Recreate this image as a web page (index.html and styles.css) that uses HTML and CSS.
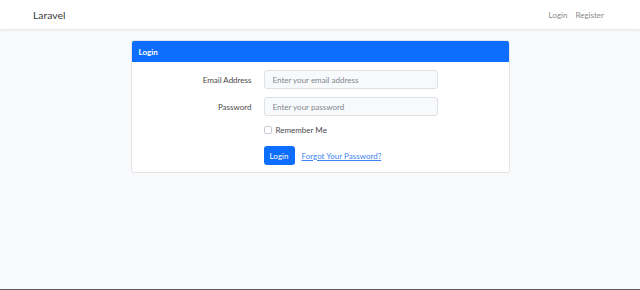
FILE: index.html
```html
<!DOCTYPE html>
<html lang="en">
<head>
<meta charset="utf-8">
<title>Laravel</title>
<link rel="stylesheet" href="styles.css">
</head>
<body>
<nav class="navbar">
  <a class="brand" href="#">Laravel</a>
  <div class="nav-links">
    <a class="nav-link" href="#">Login</a>
    <a class="nav-link" href="#">Register</a>
  </div>
</nav>
<main class="main">
  <div class="card">
    <div class="card-header">Login</div>
    <form class="card-body">
      <label class="label" for="email">Email Address</label>
      <input class="input" id="email" type="email" placeholder="Enter your email address">
      <label class="label" for="password">Password</label>
      <input class="input" id="password" type="password" placeholder="Enter your password">
      <div class="check-row">
        <span class="checkbox"></span>
        <span class="check-label">Remember Me</span>
      </div>
      <div class="actions">
        <button class="btn" type="button">Login</button>
        <a class="link" href="#">Forgot Your Password?</a>
      </div>
    </form>
  </div>
</main>
</body>
</html>
```
FILE: styles.css
```css
* { box-sizing: border-box; }
html, body { margin: 0; }
body {
  min-height: 100vh;
  background: #f8f9fb;
  font-family: "Lato", "Noto Sans", sans-serif;
  font-size: 8px;
  color: #4a4a4a;
  border-bottom: 1px solid #5a5a5a;
}
.navbar {
  height: 29px;
  background: #fff;
  box-shadow: 0 1px 2px rgba(0,0,0,0.09);
  display: flex;
  align-items: center;
  justify-content: space-between;
  padding: 0 36px 0 33px;
}
.brand {
  font-size: 10.4px;
  color: #3a3a3a;
  text-decoration: none;
}
.nav-links { display: flex; gap: 8px; }
.nav-link {
  color: #8a8a8a;
  text-decoration: none;
}
.main {
  display: flex;
  justify-content: center;
  padding-top: 11px;
}
.card {
  width: 379px;
  background: #fff;
  border: 1px solid #e3e5e8;
  border-radius: 3px;
  overflow: hidden;
}
.card-header {
  height: 21px;
  background: #0d6efd;
  color: #fff;
  font-weight: 700;
  display: flex;
  align-items: center;
  padding-left: 7px;
}
.card-body {
  display: grid;
  grid-template-columns: 120px 174px;
  column-gap: 12px;
  row-gap: 8px;
  align-items: center;
  padding: 8px 0 7px 0;
  margin: 0;
}
.label {
  text-align: right;
  color: #4a4a4a;
}
.input {
  height: 19px;
  border: 1px solid #dde1e6;
  border-radius: 3px;
  background: #f8f9fa;
  padding: 0 8px;
  font: inherit;
  color: #333;
}
.input::placeholder { color: #80868e; }
.check-row {
  grid-column: 2;
  display: flex;
  align-items: center;
  gap: 4px;
  height: 10px;
  margin: 1px 0 3px;
}
.checkbox {
  width: 8px;
  height: 8px;
  border: 1px solid #c9ced4;
  border-radius: 2px;
  background: #fff;
}
.check-label { color: #4a4a4a; }
.actions {
  grid-column: 2;
  display: flex;
  align-items: center;
  gap: 7px;
}
.btn {
  height: 19px;
  width: 31px;
  padding: 0;
  border: 0;
  border-radius: 3px;
  background: #0d6efd;
  color: #fff;
  font: inherit;
}
.link {
  color: #3d84f5;
  text-decoration: underline;
}
```
